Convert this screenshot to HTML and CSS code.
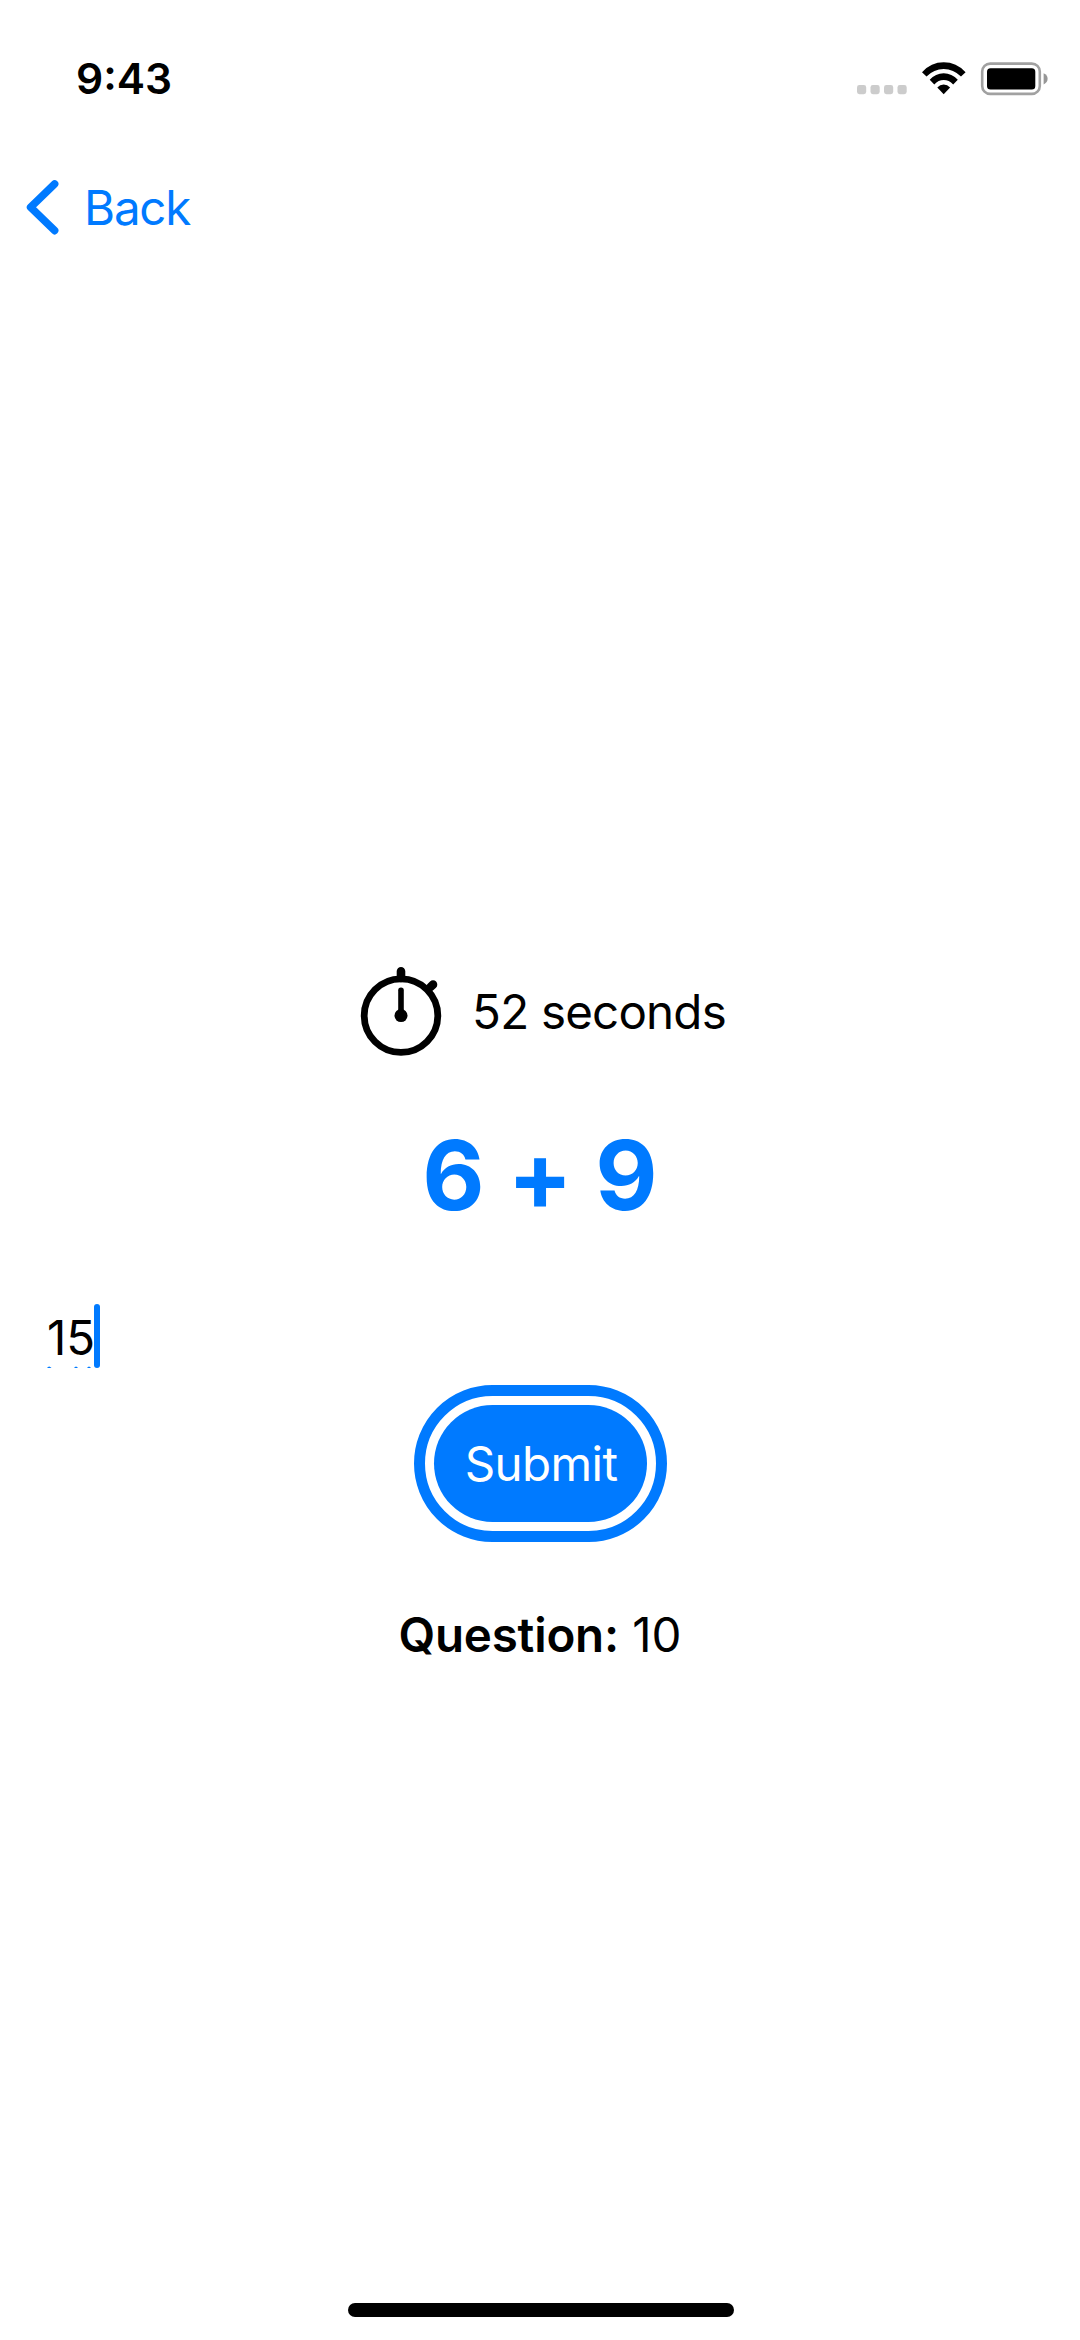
FILE: index.html
```html
<!DOCTYPE html>
<html lang="en">
<head>
<meta charset="utf-8">
<title>Quiz</title>
<link rel="stylesheet" href="styles.css">
</head>
<body>
<header class="status">
  <span class="time">9:43</span>
  <svg class="indicators" width="196" height="40" viewBox="855 58 196 40">
    <g fill="#ccc">
      <rect x="857" y="85" width="9.2" height="9.2" rx="2.4"/>
      <rect x="870.5" y="85" width="9.2" height="9.2" rx="2.4"/>
      <rect x="884" y="85" width="9.2" height="9.2" rx="2.4"/>
      <rect x="897.5" y="85" width="9.2" height="9.2" rx="2.4"/>
    </g>
    <path d="M922 72.2Q931 62.3 943.7 62.3T965.6 72.2L961 76.6Q953.5 69 943.7 69T926.5 76.6Z"/>
    <path d="M929.7 79.8Q935.5 73.2 943.7 73.2T957.8 79.8L953.2 84.4Q949 80 943.7 80T934.3 84.4Z"/>
    <path d="M937.3 87.6Q940 84.4 943.7 84.4T950.1 87.6L943.7 94.2Z"/>
    <rect x="982.2" y="63.6" width="57.6" height="30.3" rx="8" fill="none" stroke="#a1a1a1" stroke-width="2.6"/>
    <rect x="987" y="68.2" width="48.3" height="21.2" rx="3.5"/>
    <path d="M1043.6 73.2Q1047.6 75 1047.6 78.8T1043.6 84.4Z" fill="#969696"/>
  </svg>
</header>
<nav class="nav">
  <svg class="chevron" width="36" height="60" viewBox="24 177 36 60"><path d="M54.6 184L30.6 207.3L54.6 230.6" fill="none" stroke="#007aff" stroke-width="7.6" stroke-linecap="round" stroke-linejoin="round"/></svg>
  <a class="back">Back</a>
</nav>
<main class="quiz">
  <div class="timer">
    <svg width="84" height="90" viewBox="359 966 84 90">
      <circle cx="401" cy="1015.6" r="36.8" fill="none" stroke="#000" stroke-width="6.8"/>
      <path d="M401 971.3V978M430.5 987L433 984.6" fill="none" stroke="#000" stroke-width="8.6" stroke-linecap="round"/>
      <path d="M401 990.3V1015" stroke="#000" stroke-width="5.6" stroke-linecap="round"/>
      <circle cx="401" cy="1015.6" r="6.5"/>
    </svg>
    <span class="seconds">52 seconds</span>
  </div>
  <h1 class="equation">6 + 9</h1>
  <div class="answer"><span class="value">15</span><span class="caret"></span>
    <svg class="underline" width="48" height="2" viewBox="0 0 48 2" fill="#007aff"><path d="M0 2Q2 -1 4.500 2ZM27 2Q29 -1 31 2ZM40 2Q42 -1 44 2Z"/></svg>
  </div>
  <button class="submit"><span class="label">Submit</span></button>
  <p class="question"><b class="name">Question:</b> <span class="number">10</span></p>
</main>
<div class="home"></div>
</body>
</html>
```
FILE: styles.css
```css
* { box-sizing: border-box; }
body {
  margin: 0;
  width: 1080px;
  height: 2340px;
  display: flex;
  flex-direction: column;
  background: #fff;
  color: #000;
  font: 400 47.5px/60px Inter, "Liberation Sans", sans-serif;
  white-space: nowrap;
}
.status {
  height: 156px;
  padding: 0 29px 0 76px;
  display: flex;
  align-items: center;
  justify-content: space-between;
}
.time {
  padding-top: 2px;
  font-size: 42.5px;
  font-weight: 600;
}
.nav {
  height: 102px;
  padding-left: 24px;
  display: flex;
  align-items: center;
  gap: 24px;
  color: #007aff;
}
.back { letter-spacing: -1.2px; padding-top: 1px; }
.quiz {
  flex: 1;
  display: flex;
  flex-direction: column;
  align-items: center;
  padding-top: 708px;
}
.timer {
  height: 90px;
  padding-left: 5px;
  display: flex;
  align-items: center;
  gap: 29px;
}
.seconds { letter-spacing: -0.8px; padding-top: 2px; }
.equation {
  margin: 61px 0 0;
  font-size: 96px;
  line-height: 116px;
  font-weight: 700;
  font-feature-settings: "calt" 0;
  color: #007aff;
}
.answer {
  position: relative;
  align-self: stretch;
  height: 64px;
  margin-top: 71px;
  padding-left: 47px;
  display: flex;
}
.value { line-height: 67px; width: 47px; }
.caret {
  width: 6px;
  height: 64px;
  border-radius: 3px;
  background: #007aff;
}
.underline {
  position: absolute;
  left: 47px;
  bottom: 0;
}
.submit {
  width: 253px;
  height: 157px;
  margin: 17px 0 0 1px;
  padding: 9px;
  border: 11.5px solid #007aff;
  border-radius: 79px;
  background: #fff;
  color: #fff;
  font: inherit;
}
.label {
  display: flex;
  height: 100%;
  align-items: center;
  justify-content: center;
  padding-left: 1px;
  border-radius: 59px;
  background: #007aff;
  letter-spacing: -0.6px;
}
.question { margin: 63px 0 0; }
.name { font-weight: 600; letter-spacing: -0.2px; }
.home {
  align-self: center;
  width: 386px;
  height: 14px;
  margin: 0 0 23px 1px;
  border-radius: 7px;
  background: #000;
}
```
